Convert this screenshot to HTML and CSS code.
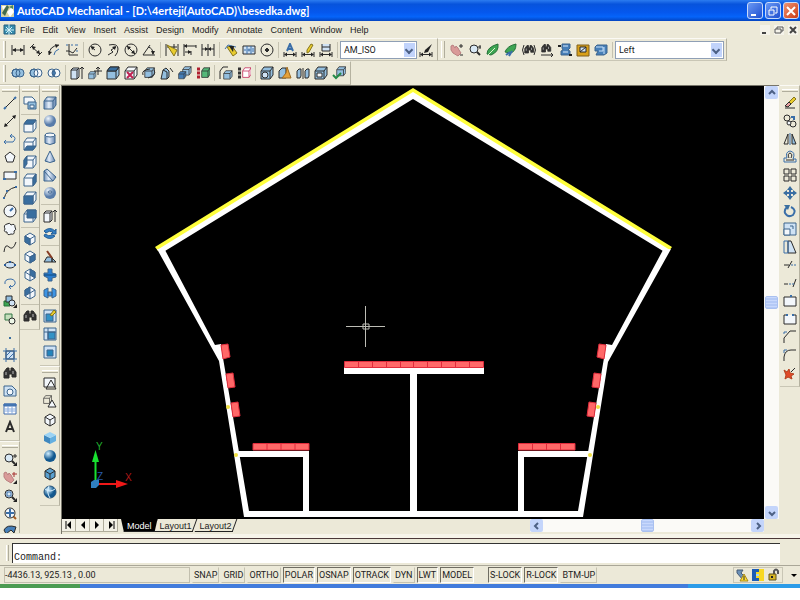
FILE: index.html
```html
<!DOCTYPE html>
<html lang="en">
<head>
    <meta charset="UTF-8">
    <title>AutoCAD Mechanical - [D:\4erteji(AutoCAD)\besedka.dwg]</title>
    <link rel="stylesheet" href="styles.css">
</head>
<body>
    <!-- shapes shared by several toolbar icons -->
    <svg class="defs" width="0" height="0">
        <defs>
            <g id="cube"><path d="M1 5L4 1H13V9L10 13H1Z"/><path d="M1 5H10V13M10 5L13 1"/></g>
            <g id="iso"><path d="M7 1L12 4V10L7 13L2 10V4Z"/><path d="M2 4L7 7L12 4M7 7V13"/></g>
            <g id="dim"><path d="M1 9V14M13 9V14M2 11.5H12"/><path d="M1 11.5l3-2v4zM13 11.5l-3-2v4z" fill="#222" stroke="none"/></g>
            <g id="bino"><path d="M1 6L4 2H6V5H8V2H10L13 6V11H9V8H6V12H1Z" fill="#333"/><path d="M3 6V9M10 5V8" stroke="#bbb"/></g>
            <g id="lens"><circle cx="6" cy="6" r="4" fill="#d8e8f4"/><path d="M9 9L12 12" stroke-width="2"/></g>
            <g id="hand"><path d="M1 3L3 2L5 5L6 3L8 5L9 7L11 10L8 13L3 10L1 7Z" fill="#d99a98" stroke="#b98080"/></g>
            <linearGradient id="steel"><stop offset="0" stop-color="#6f8fb8"/><stop offset=".4" stop-color="#e4eefa"/><stop offset="1" stop-color="#6584ae"/></linearGradient>
            <radialGradient id="ball" cx=".35" cy=".3"><stop offset="0" stop-color="#f0f6fd"/><stop offset="1" stop-color="#587caa"/></radialGradient>
            <radialGradient id="globe" cx=".35" cy=".3"><stop offset="0" stop-color="#d0eeff"/><stop offset="1" stop-color="#12588f"/></radialGradient>
        </defs>
    </svg>

    <header class="title-bar">
        <svg class="app-icon" width="14" height="14"><path d="M0 1H13V13H0Z" fill="#d5d2a4"/><path d="M1 9L6 1L8 3L4 12Z" fill="#426a4c"/><path d="M6 8L11 3L13 8L9 13Z" fill="#fff"/><path d="M8 3L12 1V5Z" fill="#4d8a5a"/><path d="M1 2H5L2 6Z" fill="#fff"/></svg>
        <h1>AutoCAD Mechanical - [D:\4erteji(AutoCAD)\besedka.dwg]</h1>
        <button class="win-btn" aria-label="Minimize"><svg width="14" height="14"><path d="M3 11H8" stroke="#fff" stroke-width="2"/></svg></button>
        <button class="win-btn" aria-label="Restore"><svg width="14" height="14"><path d="M5 5V3H11V9H9M3 6H8V11H3Z" fill="none" stroke="#fff"/></svg></button>
        <button class="win-btn close" aria-label="Close"><svg width="14" height="14"><path d="M3 3L11 11M11 3L3 11" stroke="#fff" stroke-width="2"/></svg></button>
    </header>

    <nav class="menu-bar">
        <svg width="13" height="13"><path d="M1 2H12V11H1Z" fill="#348cae" stroke="#28617e"/><path d="M6 1V12M2 7H11M3 4L9 10M9 4L3 10" stroke="#d4f2f8"/></svg>
        <button>File</button><button>Edit</button><button>View</button><button>Insert</button><button>Assist</button><button>Design</button><button>Modify</button><button>Annotate</button><button>Content</button><button>Window</button><button>Help</button>
        <span class="doc-btns">
            <button aria-label="Minimize drawing"><svg width="10" height="10"><path d="M2 8H6" stroke="#444" stroke-width="2"/></svg></button>
            <button aria-label="Restore drawing"><svg width="10" height="10"><path d="M3 4V2H9V6H7M1 4H7V8H1Z" fill="none" stroke="#555"/></svg></button>
            <button aria-label="Close drawing"><svg width="10" height="10"><path d="M2 2L8 8M8 2L2 8" stroke="#444" stroke-width="2"/></svg></button>
        </span>
    </nav>

    <div class="toolbar-row">
        <div class="toolbar">
            <i class="grip"></i>
            <button class="tool" aria-label="Linear dimension"><svg><path d="M1 2V12M13 2V12M2 7H12"/><path class="ink" d="M1 7l4-2v4zM13 7l-4-2v4z"/></svg></button>
            <button class="tool" aria-label="Aligned dimension"><svg><path d="M1 5L5 1M9 13L13 9M3 4L11 11"/><path class="ink" d="M3 3l4 1-3 3zM11 11l-4-1 3-3z"/></svg></button>
            <button class="tool" aria-label="Arc length"><svg><path d="M2 12Q2 3 12 2"/><path class="blue" d="M7 12Q7 8 12 6"/><path class="ink" d="M2 12l-1-4 4 1zM12 2l-4-1 1 4z"/></svg></button>
            <button class="tool" aria-label="Ordinate"><svg><path d="M4 1V12H13M1 8H4L8 10L12 5"/><path class="blue" d="M1 2H3M6 2H8M10 2H13M11 8H13" /></svg></button>
            <i class="sep"></i>
            <button class="tool" aria-label="Radius"><svg><circle cx="7" cy="7" r="6"/><path d="M7 7L3 4"/><path class="ink" d="M3 3l4 1-3 3z"/></svg></button>
            <button class="tool" aria-label="Jogged radius"><svg><path d="M3 2Q12 0 12 6Q12 10 9 13M2 12L7 9L5 7L10 4"/><path class="ink" d="M10 3l-4 1 3 3z"/></svg></button>
            <button class="tool" aria-label="Diameter"><svg><circle cx="7" cy="7" r="6"/><path d="M3 3L11 11"/><path class="ink" d="M3 3l4 1-3 3zM11 11l-4-1 3-3z"/></svg></button>
            <button class="tool" aria-label="Angular"><svg><path d="M13 12H1L8 2M6 4Q11 5 11 11"/><path class="ink" d="M11 12l-2-4h4z"/></svg></button>
            <i class="sep"></i>
            <button class="tool" aria-label="Quick dimension"><svg><path d="M1 1V13M13 1V13M2 4H12"/><path class="yellow" d="M2 2L12 7L9 13Z"/><path d="M9 1V5"/></svg></button>
            <button class="tool" aria-label="Baseline"><svg><path d="M1 1V13M13 2V5M8 8V12M1 3H13M2 9H8"/><path class="ink" d="M1 3l3-2v4zM8 9l-3-2v4z"/></svg></button>
            <button class="tool" aria-label="Continue"><svg><path d="M1 1V13M7 1V13M13 1V13M1 6H13"/><path class="ink" d="M7 6l-3-2v4zM7 6l3-2v4z"/></svg></button>
            <i class="sep"></i>
            <button class="tool" aria-label="Leader"><svg><path class="yellow" d="M3 4L8 3L13 10L9 13Z"/><path class="blue" d="M1 6L4 2L12 4"/><path class="ink" d="M5 3h5l-1 6z"/></svg></button>
            <button class="tool" aria-label="Tolerance"><svg><path class="pale" d="M1 3H13V11H1Z"/><path class="blue" d="M5 3V11M9 3V11M2 7H4M11 5V9"/><circle class="blue" cx="7" cy="7" r="1"/></svg></button>
            <button class="tool" aria-label="Center mark"><svg><circle cx="7" cy="7" r="6"/><path d="M7 5V9M5 7H9" stroke-width="2"/></svg></button>
            <i class="sep"></i>
            <button class="tool" aria-label="Dimension text edit"><svg><path class="blue thick" d="M4 8L7 1L10 8M5 6H9"/><use href="#dim"/></svg></button>
            <button class="tool" aria-label="Dimension edit"><svg><path class="yellow" d="M6 7L10 1L12 2L8 9L6 10Z"/><use href="#dim"/></svg></button>
            <button class="tool" aria-label="Dimension update"><svg><path class="pale" d="M3 1V8H11V1M3 4H11"/><use href="#dim"/></svg></button>
            <i class="sep"></i>
            <span class="combo dim-style"><select aria-label="Dimension style"><option>AM_ISO</option></select></span>
            <button class="tool" aria-label="Style manager"><svg><path class="ink" d="M13 1L6 7L5 10L9 9Z"/><use href="#dim"/></svg></button>
        </div>
        <div class="toolbar">
            <i class="grip double"></i>
            <button class="tool" aria-label="Pan"><svg><use href="#hand"/><path d="M11 1V5M9 3H13M10 12H13"/></svg></button>
            <button class="tool" aria-label="Zoom"><svg><use href="#lens"/><path d="M12 2V6M10 4H13"/></svg></button>
            <button class="tool" aria-label="Orbit"><svg><path class="green" d="M1 11Q1 4 12 1Q13 9 5 12Z"/><path d="M2 12L9 5" stroke="#dff5d0"/></svg></button>
            <button class="tool" aria-label="Continuous orbit"><svg><path class="green" d="M1 9Q3 3 12 1Q12 9 6 10Z"/><path class="blue thick" d="M2 12L6 9M5 13L8 8"/></svg></button>
            <button class="tool" aria-label="Swivel"><svg><use href="#bino" transform="translate(2 1) scale(.75)"/><path d="M2 2Q-1 7 2 12M12 2Q15 7 12 12"/></svg></button>
            <button class="tool" aria-label="Adjust distance"><svg><use href="#bino" transform="translate(1 0) scale(.75)"/><path d="M1 12H13M11 10L13 12L11 14"/></svg></button>
            <button class="tool" aria-label="Walk"><svg class="steel-line"><path class="mid" d="M4 1H12V5L10 7L12 8V12H3V8L5 7L4 5Z"/><path d="M5 3H10M5 9H10" stroke="#d6eafa"/><path class="ink" d="M0 2H3V4H0ZM11 11H14V13H11Z"/></svg></button>
            <button class="tool" aria-label="Fly"><svg><path d="M1 2H13V13H1Z" fill="#d8a019" stroke="#80601c"/><path class="pale" d="M4 4H10V9H4Z"/><path d="M4 9L10 4"/></svg></button>
            <button class="tool" aria-label="Clip planes"><svg class="steel-line"><path class="mid" d="M3 2H13V10L10 12H2L4 8H1V4Z"/><path d="M2 4H9V8H5M10 4V11" stroke="#c7e1f8"/></svg></button>
            <i class="sep"></i>
            <span class="combo view-name"><select aria-label="View"><option>Left</option></select></span>
        </div>
    </div>

    <div class="toolbar-row">
        <div class="toolbar">
            <i class="grip"></i>
            <button class="tool" aria-label="Union"><svg class="steel-line"><circle class="sky" cx="5" cy="7" r="4"/><circle class="sky" cx="9" cy="7" r="4"/><circle cx="5" cy="7" r="4"/></svg></button>
            <button class="tool" aria-label="Subtract"><svg class="steel-line"><circle class="sky" cx="5" cy="7" r="4"/><circle class="paper" cx="9" cy="7" r="4"/><circle cx="5" cy="7" r="4"/></svg></button>
            <button class="tool" aria-label="Intersect"><svg class="steel-line"><circle class="paper" cx="5" cy="7" r="4"/><circle class="paper" cx="9" cy="7" r="4"/><path class="mid" d="M7 4Q10 7 7 10Q4 7 7 4"/></svg></button>
            <i class="sep"></i>
            <button class="tool" aria-label="Extrude faces"><svg><path class="pale" d="M1 4L3 2H9V11L7 13H1Z"/><path d="M1 4H7V13M7 4L9 2M12 1V13M10 3L12 1L14 3"/></svg></button>
            <button class="tool" aria-label="Move faces"><svg><use class="sky" href="#cube" transform="translate(0 5) scale(.6)"/><path d="M10 1V9M6 5H14M8 3L10 1L12 3"/></svg></button>
            <button class="tool" aria-label="Offset faces"><svg><use class="sky" href="#cube"/><path class="deep" d="M1 5L4 1H13L10 5Z"/></svg></button>
            <button class="tool" aria-label="Delete faces"><svg><use class="paper" href="#cube"/><path d="M3 6L9 12M9 6L3 12" stroke="#c02050" stroke-width="2"/></svg></button>
            <button class="tool" aria-label="Rotate faces"><svg><use class="sky" href="#cube" transform="translate(2 1) scale(.8)"/><path d="M1 9Q-1 4 8 3M12 4Q15 9 6 12"/></svg></button>
            <button class="tool" aria-label="Taper faces"><svg><path class="sky" d="M3 4L6 2L9 5V11L7 13H1Z"/><path d="M3 4L7 6V13M10 2L13 6"/></svg></button>
            <button class="tool" aria-label="Copy faces"><svg><use class="sky" href="#cube" transform="translate(4 0) scale(.7)"/><use class="mid" href="#cube" transform="translate(0 5) scale(.6)"/></svg></button>
            <button class="tool" aria-label="Color faces"><svg><path d="M1 3H4M1 7H4M1 11H4" stroke="#b02030" stroke-width="3"/><use href="#cube" transform="translate(5 1) scale(.7 .8)" fill="#54b878"/></svg></button>
            <i class="sep"></i>
            <button class="tool" aria-label="Copy edges"><svg><use class="sky" href="#cube" transform="translate(4 4) scale(.7)"/><path d="M1 13V5L4 1H9"/></svg></button>
            <button class="tool" aria-label="Color edges"><svg><path d="M1 3H4M1 7H4M1 11H4" stroke="#333" stroke-width="3"/><use href="#cube" transform="translate(5 1) scale(.7 .8)" fill="#fff" stroke="#c02050"/></svg></button>
            <i class="sep"></i>
            <button class="tool" aria-label="Imprint"><svg><use class="sky" href="#cube"/><circle class="pale" cx="5" cy="9" r="3"/></svg></button>
            <button class="tool" aria-label="Clean"><svg><path class="sky" d="M1 5L4 2H8V12H1Z"/><path d="M9 1L13 12H4L8 7Z" fill="#e5a13a" stroke="#9c6a20"/></svg></button>
            <button class="tool" aria-label="Separate"><svg><path class="sky" d="M1 5L3 3H5V10L4 12H1ZM9 5L11 3H13V10L12 12H9Z"/><path d="M7 2V13"/></svg></button>
            <button class="tool" aria-label="Shell"><svg><use class="sky" href="#cube"/><path class="paper" d="M3 7H8V11H3Z"/></svg></button>
            <button class="tool" aria-label="Check"><svg><use class="sky" href="#cube" transform="translate(4 0) scale(.75)"/><path d="M1 9L4 12L9 7" stroke="#248a48" stroke-width="2"/></svg></button>
        </div>
    </div>

    <main class="work">
        <div class="dock">
            <div class="toolbar vertical">
                <i class="grip"></i>
                <button class="tool" aria-label="Line"><svg><path d="M2 12L12 2"/><path d="M1 13L3 11M11 3L13 1" stroke="#3a6ea8" stroke-width="2"/></svg></button>
                <button class="tool" aria-label="Construction line"><svg><path d="M2 12L12 2"/><path class="ink" d="M1 13l1-4 3 3zM13 1l-4 1 3 3z"/></svg></button>
                <button class="tool" aria-label="Polyline"><svg><path class="blue" d="M1 10H10Q14 6 10 4H7M3 8L1 10L3 12M9 2L7 4L9 6"/></svg></button>
                <button class="tool" aria-label="Polygon"><svg><path class="paper" d="M7 2L12 6L10 12H4L2 6Z"/></svg></button>
                <button class="tool" aria-label="Rectangle"><svg><path class="paper" d="M1 4H13V11H1Z"/><path d="M0 11H3M11 4H14" stroke="#3a6ea8" stroke-width="2"/></svg></button>
                <button class="tool" aria-label="Arc"><svg><path d="M1 13Q3 3 13 1"/><path d="M1 13V11M4 6V4M12 1H14" stroke="#3a6ea8" stroke-width="2"/></svg></button>
                <button class="tool" aria-label="Circle"><svg><circle class="paper" cx="7" cy="7" r="6"/><path class="blue thick" d="M7 7L10 4"/></svg></button>
                <button class="tool" aria-label="Revision cloud"><svg><path class="paper" d="M4 2Q7 0 8 3Q12 1 12 5Q14 8 11 9Q12 13 8 12Q4 14 4 10Q0 10 2 7Q0 3 4 2Z"/></svg></button>
                <button class="tool" aria-label="Spline"><svg><path d="M1 12Q2 3 6 7T13 2"/></svg></button>
                <button class="tool" aria-label="Ellipse"><svg><ellipse class="pale" cx="7" cy="7" rx="5" ry="3"/><path d="M1 7H3M11 7H13M7 3V5" stroke="#2a5a98" stroke-width="2"/></svg></button>
                <button class="tool" aria-label="Elliptical arc"><svg><path class="blue" d="M2 8Q1 3 8 3Q13 4 12 8Q11 11 6 11M8 9L6 11L8 13"/></svg></button>
                <button class="tool" aria-label="Insert block"><svg><path class="green" d="M1 7H7V12H1Z"/><path class="sky" d="M3 2H9V8H3Z"/><circle class="pale" cx="9" cy="9" r="3"/><path class="ink" d="M14 10v4h-4z"/></svg></button>
                <button class="tool" aria-label="Make block"><svg><path d="M2 2H9V8H2Z" fill="#c5dfbc" stroke="#337744"/><circle cx="9" cy="9" r="3" fill="#eef7e8"/></svg></button>
                <button class="tool" aria-label="Point"><svg><path class="deep" stroke="none" d="M6 7H8V9H6Z"/></svg></button>
                <button class="tool" aria-label="Hatch"><svg><path class="pale" d="M3 3H11V11H3Z"/><path class="blue" d="M3 0V14M11 0V14M0 3H14M0 11H14M3 8L8 3M5 11L11 5"/></svg></button>
                <button class="tool" aria-label="Find"><svg><use href="#bino"/></svg></button>
                <button class="tool" aria-label="Region"><svg class="steel-line"><path class="pale" d="M1 2H9L13 6V12H1Z"/><circle class="paper" cx="7" cy="8" r="3"/></svg></button>
                <button class="tool" aria-label="Table"><svg><path d="M1 2H13V12H1Z" fill="#fff" stroke="#416cad"/><path class="mid" stroke="#416cad" d="M1 2H13V4H1Z"/><path d="M5 4V12M9 4V12M1 7H13M1 9H13" stroke="#88aadd"/></svg></button>
                <button class="tool" aria-label="Multiline text"><svg><path d="M3 12L7 2L11 12M4 9H10" stroke-width="2"/></svg></button>
            </div>
            <div class="toolbar vertical">
                <i class="grip"></i>
                <button class="tool" aria-label="Zoom realtime"><svg><use href="#lens"/><path d="M12 2V6M10 4H14"/><path class="ink" d="M14 10v4h-4z"/></svg></button>
                <button class="tool" aria-label="Pan realtime"><svg><use href="#hand"/><path d="M11 2V7M9 4H14" stroke="#a63030"/><path class="ink" d="M14 10v4h-4z"/></svg></button>
                <button class="tool" aria-label="Zoom window"><svg><use href="#lens"/><path class="blue" d="M4 4H8V8H4Z"/><path class="ink" d="M14 10v4h-4z"/></svg></button>
                <button class="tool" aria-label="Zoom extents"><svg><path d="M10 10L13 13" stroke="#a65a20" stroke-width="2"/><circle class="paper" cx="7" cy="7" r="5"/><path class="blue thick" d="M7 3V11M3 7H11"/></svg></button>
                <button class="tool" aria-label="Zoom previous"><svg><path class="mid" d="M1 6Q4 0 13 3L11 9L8 6L3 10Z"/></svg></button>
            </div>
        </div>

        <div class="dock">
            <div class="toolbar vertical">
                <i class="grip"></i>
                <button class="tool" aria-label="Named views"><svg class="steel-line"><path class="paper" d="M1 1H9L12 4V8H1Z"/><path class="sky" d="M5 6H13V13H5Z"/><path class="paper" d="M7 9H11V12H7Z"/></svg></button>
                <i class="sep"></i>
                <button class="tool" aria-label="Top"><svg class="steel-line"><use class="paper" href="#cube"/><path class="deep" d="M1 5L4 1H13L10 5Z"/></svg></button>
                <button class="tool" aria-label="Bottom"><svg class="steel-line"><use class="paper" href="#cube"/><path class="deep" d="M1 13L4 9H13L10 13Z"/></svg></button>
                <button class="tool" aria-label="Left view"><svg class="steel-line"><use class="paper" href="#cube"/><path class="deep" d="M1 5L4 1V9L1 13Z"/></svg></button>
                <button class="tool" aria-label="Right view"><svg class="steel-line"><use class="paper" href="#cube"/><path class="deep" d="M10 5L13 1V9L10 13Z"/></svg></button>
                <button class="tool" aria-label="Front"><svg class="steel-line"><use class="paper" href="#cube"/><path class="deep" d="M1 5H10V13H1Z"/></svg></button>
                <button class="tool" aria-label="Back"><svg class="steel-line"><use class="paper" href="#cube"/><path class="deep" d="M4 1H13V9H4Z"/></svg></button>
                <i class="sep"></i>
                <button class="tool" aria-label="SW isometric"><svg class="steel-line"><use class="paper" href="#iso"/><path class="deep" d="M2 4L7 7V13L2 10Z"/></svg></button>
                <button class="tool" aria-label="SE isometric"><svg class="steel-line"><use class="paper" href="#iso"/><path class="deep" d="M7 7L12 4V10L7 13Z"/></svg></button>
                <button class="tool" aria-label="NE isometric"><svg class="steel-line"><use class="paper" href="#iso"/><path class="deep" d="M7 1L12 4V10L7 7Z"/></svg></button>
                <button class="tool" aria-label="NW isometric"><svg class="steel-line"><use class="paper" href="#iso"/><path class="deep" d="M7 1L2 4V10L7 7Z"/></svg></button>
                <i class="sep"></i>
                <button class="tool" aria-label="Camera"><svg><use href="#bino"/></svg></button>
            </div>
        </div>

        <div class="dock">
            <div class="toolbar vertical">
                <i class="grip"></i>
                <button class="tool" aria-label="Box"><svg class="steel-line"><use href="#cube" fill="url(#steel)"/></svg></button>
                <button class="tool" aria-label="Sphere"><svg><circle cx="7" cy="7" r="6" fill="url(#ball)" stroke="none"/></svg></button>
                <button class="tool" aria-label="Cylinder"><svg class="steel-line"><path d="M2 3V11Q7 14 12 11V3" fill="url(#steel)"/><ellipse class="paper" cx="7" cy="3" rx="5" ry="2"/></svg></button>
                <button class="tool" aria-label="Cone"><svg class="steel-line"><path d="M7 1L12 11Q7 14 2 11Z" fill="url(#steel)"/></svg></button>
                <button class="tool" aria-label="Wedge"><svg class="steel-line"><path d="M1 3L4 1L13 9L10 13H1Z" fill="url(#steel)"/><path d="M1 3L10 13"/></svg></button>
                <button class="tool" aria-label="Torus"><svg><circle cx="7" cy="7" r="6" fill="url(#ball)" stroke="none"/><ellipse cx="7" cy="6" rx="2" ry="1" fill="#fff" stroke="#345b8a"/></svg></button>
                <i class="sep"></i>
                <button class="tool" aria-label="Extrude"><svg><path class="paper" d="M1 4L3 2H9V11L7 13H1Z"/><path d="M1 4H7V13M7 4L9 2M12 1V13M10 3L12 1L14 3"/></svg></button>
                <button class="tool" aria-label="Revolve"><svg><path d="M1 4Q7-1 12 4L13 2V7H8L10 5Q6 3 3 6ZM1 9Q7 14 12 9L9 8Q6 10 2 7Z" fill="#3480c4" stroke="#235d96"/></svg></button>
                <i class="sep"></i>
                <button class="tool" aria-label="Slice"><svg><path class="sky" d="M1 12L4 7H9V12ZM9 8L13 12H9Z"/><path d="M4 1L9 8" stroke="#863c24" stroke-width="2"/></svg></button>
                <button class="tool" aria-label="Section"><svg class="steel-line"><path d="M5 1H9V5L13 6V9L9 10V13H5V10L1 8V5L5 5Z" fill="#2b7ed0"/><path d="M1 7H13" stroke="#114777"/></svg></button>
                <button class="tool" aria-label="Interfere"><svg class="steel-line"><path d="M1 4L5 2V12L1 10ZM13 4L9 2V12L13 10ZM5 6H9V10H5Z" fill="#3c95e5"/></svg></button>
                <i class="sep"></i>
                <button class="tool" aria-label="Setup drawing"><svg class="steel-line"><path class="pale" d="M1 1H13V13H1Z"/><path d="M3 5H10V12H3Z" fill="#3392c6"/><path class="yellow" d="M7 6L11 1L13 3L9 7Z"/></svg></button>
                <button class="tool" aria-label="Setup view"><svg class="steel-line"><path class="pale" d="M1 1H13V13H1Z"/><path d="M5 5H12V12H5Z" fill="#3392c6"/><path d="M1 5H13M5 1V13"/></svg></button>
                <button class="tool" aria-label="Setup profile"><svg class="steel-line"><path class="pale" d="M1 1H13V13H1Z"/><path d="M4 5H10V11H4Z" fill="#2284bc"/></svg></button>
            </div>
            <div class="toolbar vertical">
                <i class="grip"></i>
                <button class="tool" aria-label="2D wireframe"><svg><path class="paper" d="M1 1H12V10H1Z"/><path d="M3 12L8 3L13 12Z"/></svg></button>
                <button class="tool" aria-label="3D wireframe"><svg><use href="#cube" transform="scale(.65)"/><path class="paper" d="M9 5L13 12H5Z"/></svg></button>
                <button class="tool" aria-label="Hidden"><svg><use class="paper" href="#iso"/></svg></button>
                <button class="tool" aria-label="Flat shaded"><svg><g stroke="none"><path d="M1 4L7 7V13L1 10Z" fill="#3f88bf"/><path d="M7 7L13 4V10L7 13Z" fill="#64afe0"/><path d="M1 4L7 1L13 4L7 7Z" fill="#9bd3f5"/></g></svg></button>
                <button class="tool" aria-label="Gouraud shaded"><svg><circle cx="7" cy="7" r="6" fill="url(#globe)" stroke="none"/></svg></button>
                <button class="tool" aria-label="Flat shaded, edges on"><svg><use href="#iso" fill="#5aa0d0"/></svg></button>
                <button class="tool" aria-label="Gouraud shaded, edges on"><svg><circle cx="7" cy="7" r="6" fill="url(#globe)" stroke="#28557c"/><path d="M2 4Q7 8 12 4M6 1Q3 7 7 13" stroke="#d8f0ff"/></svg></button>
            </div>
        </div>

        <section class="viewport">
            <div class="view-top">
                <svg class="drawing" viewBox="62 86 702 433" role="img" aria-label="Plan of besedka">
                    <!-- roof -->
                    <path d="M155 247L413 88L672 247L669 251L413 94L158 251Z" fill="#ffff3c"/>
                    <path d="M157 250L413 92L670 250L663 251L413 99L165 251Z" fill="#fff"/>
                    <!-- walls -->
                    <g fill="#fff">
                        <path d="M157 249L165 250L215 345L221 344L223 358L249 511H578L604 358L606 344L612 345L663 250L671 249L608 362L583 517H244L219 361Z"/>
                        <path d="M236 451H309V514H303V457H236Z"/>
                        <path d="M590 451H518V514H524V457H590Z"/>
                        <path d="M344 367H484V374H417V514H410V374H344Z"/>
                    </g>
                    <!-- seats -->
                    <g fill="#ff6868" stroke="#e02c3c">
                        <path d="M344.500 361.500H483.500V367.500H344.500Z"/>
                        <path d="M358.500 361V368M372.500 361V368M386.500 361V368M400.500 361V368M413.500 361V368M427.500 361V368M441.500 361V368M455.500 361V368M469.500 361V368"/>
                        <path d="M253 443.500H309V450H253ZM267 444V450M281 444V450M295 444V450"/>
                        <path d="M518.500 443.500H575V450H518.500ZM532.500 444V450M546.500 444V450M560.500 444V450"/>
                        <path d="M221 345L228 344L230 357L223 359ZM226 374L233 373L235 387L228 388ZM231 403L238 402L240 416L233 417Z"/>
                        <path d="M606 345L599 344L597 357L604 359ZM601 374L594 373L592 387L599 388ZM596 403L589 402L587 416L594 417Z"/>
                    </g>
                    <g fill="#f0e040"><circle cx="228" cy="407" r="2"/><circle cx="236" cy="455" r="2"/><circle cx="598" cy="407" r="2"/><circle cx="590" cy="455" r="2"/></g>
                    <!-- crosshair -->
                    <path d="M346 326.500H385M365.500 306V347M363 324H369V329H363Z" fill="none" stroke="#bdbdb5"/>
                    <!-- UCS icon -->
                    <path d="M95.500 482V460" stroke="#18e030" stroke-width="2"/>
                    <path d="M92 462L95.500 450L99 462Z" fill="#18e030"/>
                    <path d="M98 484H118" stroke="#f01818" stroke-width="2"/>
                    <path d="M116 480L128 484L116 488Z" fill="#f01818"/>
                    <path d="M91 482L94 480H99V485L96 488H91Z" fill="#2f7fc0"/>
                    <text x="96" y="450" fill="#20b030">Y</text>
                    <text x="125" y="481" fill="#b01818">X</text>
                    <text x="97" y="480" fill="#2858a8">Z</text>
                </svg>
                <div class="scroll vertical-scroll">
                    <button aria-label="Scroll up"><svg width="8" height="8"><path d="M1 5L4 2L7 5"/></svg></button>
                    <div class="track"><span class="thumb"></span></div>
                    <button aria-label="Scroll down"><svg width="8" height="8"><path d="M1 3L4 6L7 3"/></svg></button>
                </div>
            </div>
            <div class="view-bottom">
                <div class="tabs">
                    <button class="tab-nav" aria-label="First tab"><svg width="10" height="10"><path d="M2 1V9" stroke="#000"/><path d="M7 1V9L3 5Z"/></svg></button>
                    <button class="tab-nav" aria-label="Previous tab"><svg width="10" height="10"><path d="M7 1V9L3 5Z"/></svg></button>
                    <button class="tab-nav" aria-label="Next tab"><svg width="10" height="10"><path d="M3 1V9L7 5Z"/></svg></button>
                    <button class="tab-nav" aria-label="Last tab"><svg width="10" height="10"><path d="M8 1V9" stroke="#000"/><path d="M3 1V9L7 5Z"/></svg></button>
                    <button class="tab active">Model</button>
                    <button class="tab">Layout1</button>
                    <button class="tab">Layout2</button>
                </div>
                <div class="scroll horizontal-scroll">
                    <button aria-label="Scroll left"><svg width="8" height="8"><path d="M5 1L2 4L5 7"/></svg></button>
                    <div class="track"><span class="thumb"></span></div>
                    <button aria-label="Scroll right"><svg width="8" height="8"><path d="M3 1L6 4L3 7"/></svg></button>
                </div>
            </div>
        </section>

        <div class="dock right">
            <div class="toolbar vertical">
                <i class="grip"></i>
                <button class="tool" aria-label="Erase"><svg><path class="yellow" d="M6 6L11 1L13 3L8 8Z"/><path d="M2 10L6 6L8 8L5 11Z" fill="#e7a0a0"/><path d="M2 12H12"/></svg></button>
                <button class="tool" aria-label="Copy"><svg><circle cx="4" cy="4" r="3"/><circle cx="10" cy="10" r="3"/><circle class="paper" cx="6" cy="9" r="2"/><path class="blue thick" d="M8 3H11V6"/></svg></button>
                <button class="tool" aria-label="Mirror"><svg><path d="M5 2V12H1Z"/><path class="sky" d="M9 2V12H13Z"/><path class="blue" d="M7 1V13"/></svg></button>
                <button class="tool" aria-label="Offset"><svg><path class="blue" d="M1 12H13V9H10Q13 2 7 1Q2 2 4 8H1Z"/><path d="M3 10H11M6 8Q4 4 7 3Q10 4 8 8"/></svg></button>
                <button class="tool" aria-label="Array"><svg><path d="M1 1H6V6H1ZM8 1H13V6H8ZM1 8H6V13H1ZM8 8H13V13H8Z"/></svg></button>
                <button class="tool" aria-label="Move"><svg><path class="blue thick" d="M7 2V12M2 7H12"/><path class="deep" stroke="none" d="M7 0l3 4H4zM7 14l3-4H4zM0 7l4-3v6zM14 7l-4-3v6z"/></svg></button>
                <button class="tool" aria-label="Rotate"><svg><path class="blue thick" d="M4 3Q1 6 2 9Q5 14 10 11Q14 6 8 3"/><path class="deep" stroke="none" d="M1 1H7L5 6Z"/></svg></button>
                <button class="tool" aria-label="Scale"><svg class="steel-line"><path class="pale" d="M1 1H13V13H1Z"/><path class="paper" d="M1 7H7V13H1Z"/><path d="M7 4H10V7"/></svg></button>
                <button class="tool" aria-label="Stretch"><svg><path class="pale" d="M5 1H8L13 13H5Z"/><path class="blue" d="M1 1H5V13H1Z"/></svg></button>
                <button class="tool" aria-label="Trim"><svg><path d="M1 7H6M5 10L9 3"/><path class="blue" d="M8 7H10M11 7H13"/></svg></button>
                <button class="tool" aria-label="Extend"><svg><path d="M1 8H5M10 11L13 3"/><path class="blue" d="M6 8H8M9 8H11"/></svg></button>
                <button class="tool" aria-label="Break at point"><svg><path class="paper" d="M1 3H13V12H1Z"/><path class="blue thick" d="M7 2H9"/></svg></button>
                <button class="tool" aria-label="Break"><svg><path class="paper" stroke="none" d="M1 3H13V12H1Z"/><path d="M4 3H1V12H13V3H10"/><path class="blue thick" d="M4 2V4M10 2V4"/></svg></button>
                <button class="tool" aria-label="Chamfer"><svg><path d="M1 13V8L7 1H13"/><path class="blue" d="M1 4V2H4"/></svg></button>
                <button class="tool" aria-label="Fillet"><svg><path d="M1 13V9Q2 2 8 2H13"/><path class="blue" d="M1 5V2H4"/></svg></button>
                <button class="tool" aria-label="Explode"><svg><path d="M1 4L4 6L6 3L7 7L11 8L8 10L9 13L5 11L2 13L3 9Z" fill="#e24a28" stroke="#b44220"/><path d="M8 6L12 2"/></svg></button>
            </div>
        </div>
    </main>

    <div class="command">
        <i class="grip"></i>
        <label for="cmd">Command:</label>
        <input id="cmd" type="text">
    </div>

    <footer class="status">
        <output class="coords">-4436.13, 925.13 , 0.00</output>
        <button>SNAP</button><button>GRID</button><button>ORTHO</button><button class="on">POLAR</button><button class="on">OSNAP</button><button class="on">OTRACK</button><button>DYN</button><button class="on">LWT</button><button class="on">MODEL</button>
        <i class="status-gap"></i>
        <button class="on">S-LOCK</button><button class="on">R-LOCK</button><button>BTM-UP</button>
        <span class="tray">
            <svg width="14" height="14"><path d="M2 2H8L6 5L10 9L8 12L2 5Z" fill="#6c91b8" stroke="#475b75"/><path d="M9 6L13 13H5Z" fill="#ffdf30" stroke="#a88818"/><path d="M9 8V12" stroke="#333"/></svg>
            <svg width="14" height="14"><path d="M1 1H8V13H1Z" fill="#1f5db4"/><path d="M8 1H13V13H8V10H5V4H8Z" fill="#f8d822"/><path d="M5 6H8V8H5Z" fill="#a7d7f3"/></svg>
            <svg width="14" height="14"><path d="M7 6V3Q9 0 11 3V6" fill="none" stroke="#555" stroke-width="2"/><path d="M2 6H9V12H2Z" fill="#d8b724" stroke="#62521d"/><path d="M5 8V10" stroke="#222" stroke-width="2"/></svg>
        </span>
        <button class="tray-menu" aria-label="Status bar menu"><svg width="8" height="8"><path d="M1 3H7L4 6Z"/></svg></button>
    </footer>
    <div class="taskbar-edge"></div>
</body>
</html>
```

FILE: styles.css
```css
* {
    box-sizing: border-box;
}

body {
    display: flex;
    flex-direction: column;
    height: 100vh;
    margin: 0;
    padding-bottom: 12px;
    overflow: hidden;
    background-color: #fff;
    color: #222;
    font-family: "Liberation Sans", Arial, sans-serif;
    font-size: 9px;
}

button,
input,
select {
    margin: 0;
    padding: 0;
    border: none;
    border-radius: 0;
    background: none;
    color: inherit;
    font: inherit;
}

svg {
    display: block;
    flex: none;
}

.defs {
    position: absolute;
}

/* title bar */
.title-bar {
    display: flex;
    flex: none;
    align-items: center;
    gap: 2px;
    height: 21px;
    padding: 0 1px;
    background: linear-gradient(#2c7cf0, #0753dc 20%, #0558ee 60%, #0564fa 80%, #0344c0);
}

.title-bar h1 {
    flex: 1;
    margin: 0;
    color: #fff;
    font-family: Lato, sans-serif;
    font-size: 11px;
    font-weight: bold;
    white-space: nowrap;
}

.win-btn {
    display: flex;
    align-items: center;
    justify-content: center;
    width: 16px;
    height: 17px;
    border: 1px solid #c8dafa;
    border-radius: 3px;
    background: linear-gradient(135deg, #6a98f4, #1f50d0);
}

.win-btn.close {
    background: linear-gradient(135deg, #ee9474, #cc3a12);
}

/* menu */
.menu-bar {
    display: flex;
    flex: none;
    align-items: center;
    height: 17px;
    padding-left: 3px;
    background-color: #ece9d8;
}

.menu-bar > button {
    padding: 0 4px;
}

.doc-btns {
    display: flex;
    gap: 4px;
    margin-left: auto;
    padding-right: 2px;
}

.doc-btns button {
    background-color: #f5f3ea;
}

/* toolbars */
.toolbar-row {
    display: flex;
    flex: none;
    height: 23px;
    background-color: #ece9d8;
}

.toolbar-row:nth-of-type(2) {
    height: 24px;
}

.toolbar {
    display: flex;
    align-items: center;
    padding-right: 2px;
    border-top: 1px solid #fbfaf5;
    border-right: 1px solid #b5b2a0;
    border-bottom: 1px solid #c9c6b5;
}

.grip {
    flex: none;
    width: 3px;
    height: 17px;
    margin: 0 3px;
    border-left: 1px solid #fff;
    border-right: 1px solid #b0ad9c;
}

.grip.double {
    width: 4px;
}

.sep {
    flex: none;
    width: 1px;
    height: 16px;
    margin: 0 2px;
    background-color: #c5c2b0;
}

.tool {
    display: flex;
    flex: none;
    align-items: center;
    justify-content: center;
    width: 18px;
    height: 18px;
}

.tool svg {
    width: 14px;
    height: 14px;
    fill: none;
    stroke: #2b2b2b;
}

.tool:hover {
    background-color: #dcd9c6;
}

.tool .steel-line {
    stroke: #3c648c;
}

.ink {
    fill: #222;
    stroke: none;
}

.blue {
    stroke: #3a6ea8;
}

.thick {
    stroke-width: 2;
}

.paper {
    fill: #f3f7fb;
}

.pale {
    fill: #cfe2f4;
}

.sky {
    fill: #94bfdf;
}

.mid {
    fill: #467fb8;
}

.deep {
    fill: #396e9f;
}

.yellow {
    fill: #e9cc2e;
    stroke: #85751c;
}

.green {
    fill: #3da552;
    stroke: #257038;
}

.combo {
    position: relative;
    flex: none;
    height: 18px;
    border: 1px solid #8f9fb5;
    background-color: #fff;
    font-family: Roboto, sans-serif;
}

.combo select {
    width: 100%;
    height: 16px;
    padding-left: 3px;
    appearance: none;
}

.combo::before {
    content: "";
    position: absolute;
    top: 1px;
    right: 1px;
    width: 11px;
    height: 14px;
    background-color: #c1d3fb;
    pointer-events: none;
}

.combo::after {
    content: "";
    position: absolute;
    top: 5px;
    right: 4px;
    width: 4px;
    height: 4px;
    border-right: 2px solid #4d6185;
    border-bottom: 2px solid #4d6185;
    transform: rotate(45deg);
    pointer-events: none;
}

.dim-style {
    width: 77px;
}

.view-name {
    width: 109px;
}

/* work area */
.work {
    display: flex;
    flex: 1;
    min-height: 0;
    background-color: #ece9d8;
}

.dock {
    flex: none;
    width: 20px;
    margin-bottom: 5px;
    overflow: hidden;
}

.dock.right {
    margin-left: 1px;
}

.toolbar.vertical {
    flex-direction: column;
    padding: 0 0 4px;
}

.vertical .grip {
    width: 16px;
    height: 3px;
    margin: 3px 0 2px;
    border: none;
    border-top: 1px solid #fff;
    border-bottom: 1px solid #b0ad9c;
}

.vertical .sep {
    width: 18px;
    height: 1px;
    margin: 2px 0;
}

.viewport {
    display: flex;
    flex: 1;
    flex-direction: column;
    min-width: 0;
    margin-left: 1px;
    border-top: 1px solid #77756a;
    border-left: 1px solid #77756a;
}

.view-top {
    display: flex;
    flex: 1;
    min-height: 0;
}

.drawing {
    flex: 1;
    min-width: 0;
    height: 100%;
    background-color: #000;
    font-size: 10px;
}

.scroll {
    display: flex;
    background-color: #fbfaf7;
}

.scroll button {
    display: flex;
    flex: none;
    align-items: center;
    justify-content: center;
    width: 13px;
    height: 13px;
    border-radius: 2px;
    background-color: #c4d5fb;
}

.scroll button path {
    fill: none;
    stroke: #4d6185;
    stroke-width: 2;
}

.track {
    display: flex;
    flex: 1;
    align-items: center;
    justify-content: center;
}

.thumb {
    width: 13px;
    height: 13px;
    border: 1px solid #a9c0f0;
    border-radius: 2px;
    background: repeating-linear-gradient(#c8d8fc 0 1px, #b4c9f6 1px 3px);
}

.vertical-scroll {
    flex: none;
    flex-direction: column;
    width: 15px;
    padding: 0 1px;
}

.view-bottom {
    display: flex;
    flex: none;
    height: 19px;
    margin-right: 15px;
}

.tabs {
    display: flex;
    flex: 2;
    align-items: flex-start;
}

.tab-nav {
    display: flex;
    align-items: center;
    justify-content: center;
    width: 14px;
    height: 13px;
    border-right: 1px solid #b0ad9c;
    border-bottom: 1px solid #b0ad9c;
    background-color: #f3f1e6;
}

.tab {
    position: relative;
    z-index: 0;
    height: 13px;
    padding: 0 3px;
    margin-left: 2px;
}

.tab::before {
    content: "";
    position: absolute;
    inset: 0;
    z-index: -1;
    border-right: 1px solid #222;
    border-bottom: 1px solid #222;
    transform: skewX(-20deg);
}

.tab.active {
    margin-left: 6px;
    color: #fff;
}

.tab.active::before {
    background-color: #000;
    transform: none;
    clip-path: polygon(0 0, 100% 0, 92% 100%, 8% 100%);
    inset: 0 -3px;
}

.horizontal-scroll {
    flex: 1;
    height: 13px;
}

/* command line */
.command {
    display: flex;
    flex: none;
    align-items: flex-end;
    height: 28px;
    padding: 4px 20px 2px 3px;
    border-top: 1px solid #4a3838;
    border-bottom: 1px solid #aaa798;
    background-color: #ece9d8;
    box-shadow: 0 -4px #f6f4ea;
    font-family: "Liberation Mono", "Courier New", monospace;
    font-size: 10px;
}

.command .grip {
    height: 16px;
    align-self: center;
}

.command label {
    align-self: stretch;
    padding: 8px 0 0 1px;
    border-top: 1px solid #333;
    border-left: 1px solid #333;
    background-color: #fff;
}

.command input {
    flex: 1;
    align-self: stretch;
    padding: 8px 2px 0;
    border-top: 1px solid #333;
    background-color: #fff;
    outline: none;
}

/* status bar */
.status {
    display: flex;
    flex: none;
    align-items: center;
    gap: 2px;
    height: 18px;
    padding: 1px 1px 1px 4px;
    background-color: #ece9d8;
    font-family: Roboto, sans-serif;
}

.coords {
    width: 186px;
    height: 16px;
    border: 1px solid #c2bfae;
    line-height: 14px;
}

.status button {
    height: 16px;
    padding: 0 1px;
    border: 1px solid transparent;
    border-right-color: #c5c2b0;
    border-bottom-color: #c5c2b0;
}

.status button.on {
    border-color: #6f6d62 #fff #fff #6f6d62;
}

.status-gap {
    width: 10px;
}

.tray {
    display: flex;
    gap: 2px;
    margin-left: auto;
    padding: 0 1px;
    border: 1px solid #c9c6b5;
}

.status .tray-menu {
    margin-left: 4px;
    border: none;
}

.taskbar-edge {
    flex: none;
    height: 4px;
    background: linear-gradient(90deg, #4b9b52 0 10%, #427cdc 10% 86%, #2c9ce8 86%);
}
```
